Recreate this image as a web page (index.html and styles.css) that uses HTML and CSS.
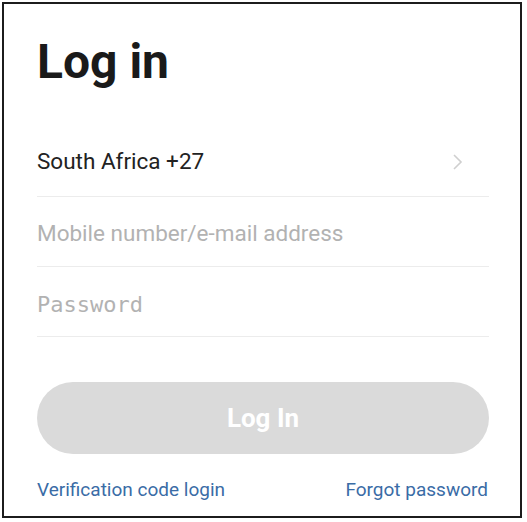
FILE: index.html
```html
<!DOCTYPE html>
<html lang="en">
<head>
<meta charset="UTF-8" />
<meta name="viewport" content="width=device-width, initial-scale=1" />
<title>Log in</title>
<link rel="stylesheet" href="styles.css">
</head>
<body>

<div class="frame">
  <h1 class="title">Log in</h1>

  <div class="field country">
    <span class="country-name">South Africa +27</span>
    <svg class="chevron" width="12" height="20" viewBox="0 0 12 20">
      <polyline points="2,3 9,10 2,17" fill="none" stroke="#cfcfcf" stroke-width="1.6" />
    </svg>
  </div>

  <div class="field">
    <input class="input" type="text" placeholder="Mobile number/e-mail address">
  </div>

  <div class="field">
    <input class="input password" type="password" placeholder="Password">
  </div>

  <button class="login-btn" disabled>Log In</button>

  <div class="links">
    <a href="#" class="link">Verification code login</a>
    <a href="#" class="link">Forgot password</a>
  </div>
</div>

</body>
</html>
```

FILE: styles.css
```css
body {
  margin: 0;
  background: #fff;
  font-family: Roboto, "Liberation Sans", Arial, sans-serif;
}

.frame {
  box-sizing: border-box;
  width: 520px;
  height: 516px;
  margin: 2px;
  border: 2px solid #1c1c1c;
  padding: 30px 31px 0 33px;
  display: flex;
  flex-direction: column;
}

.title {
  margin: 0 0 37px;
  font-size: 48px;
  line-height: 56px;
  font-weight: 700;
  color: #1a1a1a;
}

.field {
  height: 69px;
  border-bottom: 1px solid #ececec;
  display: flex;
  align-items: center;
}

.country {
  justify-content: space-between;
  padding-right: 25px;
}

.country-name {
  font-size: 22.5px;
  line-height: 69px;
  color: #222;
}

.chevron {
  display: block;
}

.input {
  width: 100%;
  border: none;
  outline: none;
  padding: 2px 0 0;
  background: transparent;
  font-family: Roboto, "Liberation Sans", Arial, sans-serif;
  font-size: 22.5px;
  line-height: 67px;
  height: 69px;
  color: #222;
}

.input::placeholder {
  color: #b2b2b2;
}

.password {
  padding-top: 6px;
  line-height: 63px;
  font-family: "DejaVu Sans Mono", "Liberation Mono", monospace;
  font-size: 22px;
}

.login-btn {
  margin-top: 45px;
  height: 72px;
  width: 452px;
  border: none;
  border-radius: 36px;
  background: #dadada;
  color: #fff;
  font-family: Roboto, "Liberation Sans", Arial, sans-serif;
  font-size: 26px;
  font-weight: 700;
}

.links {
  margin-top: 24px;
  width: 451px;
  display: flex;
  justify-content: space-between;
}

.link {
  font-size: 19px;
  line-height: 24px;
  color: #3a6ca6;
  text-decoration: none;
}
```
